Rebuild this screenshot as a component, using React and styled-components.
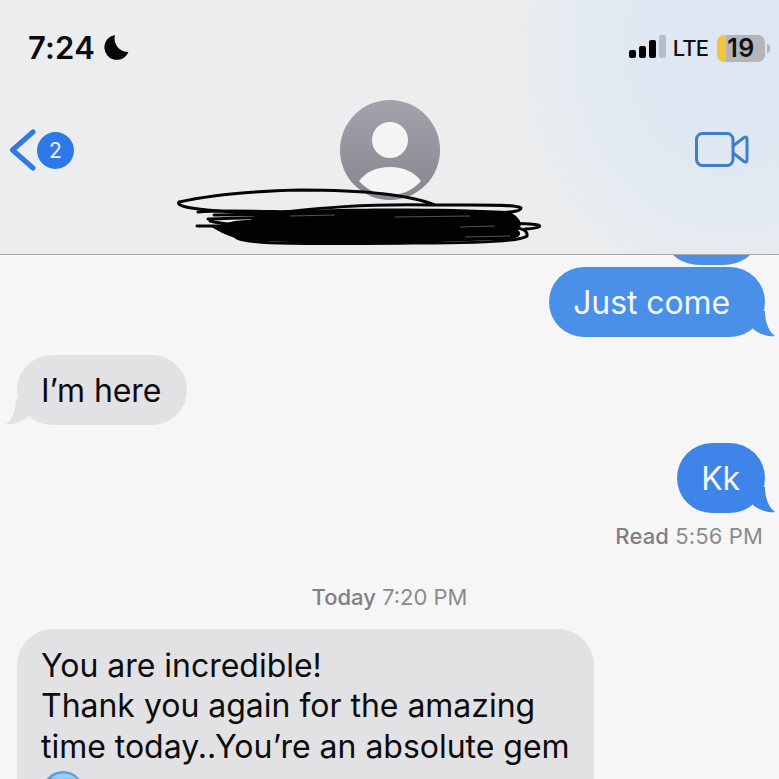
import React from "react";
import styled, { createGlobalStyle } from "styled-components";

const GlobalStyle = createGlobalStyle`
  html, body {
    margin: 0;
    padding: 0;
    background: #f6f6f6;
  }
  * { box-sizing: border-box; }
`;

const Screen = styled.div`
  width: 779px;
  height: 779px;
  overflow: hidden;
  display: flex;
  flex-direction: column;
  background: #f6f6f6;
  font-family: Inter, "Liberation Sans", sans-serif;
`;

const Header = styled.header`
  position: relative;
  height: 255px;
  flex: none;
  border-bottom: 1px solid #a9a9ab;
  background:
    radial-gradient(ellipse 230px 270px at 730px 50px, #dbe7f4 0%, rgba(222, 232, 243, 0.75) 55%, rgba(238, 239, 240, 0) 100%),
    #ecedee;
`;

const StatusBar = styled.div`
  height: 96px;
  display: flex;
  justify-content: space-between;
  align-items: flex-start;
  padding: 30px 14px 0 28px;
`;

const Clock = styled.div`
  display: flex;
  align-items: center;
  gap: 9px;
  font-size: 31px;
  line-height: 36px;
  font-weight: 600;
  letter-spacing: 0.2px;
  color: #0b0b0b;
`;

const Moon = styled.svg`
  margin-top: -3px;
`;

const StatusRight = styled.div`
  display: flex;
  align-items: center;
  height: 36px;
  gap: 8px;
`;

const Signal = styled.div`
  display: flex;
  align-items: flex-end;
  gap: 3px;
  height: 23px;
  margin-top: -3px;
  margin-right: -1px;
`;

const SignalBar = styled.span`
  width: 7px;
  height: ${(props) => props.$h}px;
  border-radius: 2px;
  background: ${(props) => (props.$off ? "#b9bdc3" : "#050505")};
`;

const Lte = styled.span`
  font-size: 22px;
  font-weight: 500;
  letter-spacing: -0.9px;
  color: #101010;
`;

const Battery = styled.div`
  position: relative;
  width: 48px;
  height: 27px;
  margin-left: 1px;
  border-radius: 7px;
  background: linear-gradient(90deg, #f2c53d 0 9px, #b3b5b8 9px);
  display: flex;
  align-items: center;
  justify-content: center;
  font-size: 25px;
  font-weight: 600;
  letter-spacing: 0.4px;
  color: #111;

  &::after {
    content: "";
    position: absolute;
    right: -5px;
    top: 9px;
    width: 3px;
    height: 9px;
    border-radius: 0 3px 3px 0;
    background: #b3b5b8;
  }
`;

const NavBar = styled.div`
  display: flex;
  justify-content: space-between;
  align-items: flex-start;
  padding: 4px 30px 0 10px;
`;

const BackLink = styled.div`
  display: flex;
  align-items: center;
  gap: 1px;
  margin-top: 28px;
`;

const Badge = styled.div`
  width: 37px;
  height: 37px;
  border-radius: 50%;
  background: #2f78e8;
  color: #eef4fd;
  display: flex;
  align-items: center;
  justify-content: center;
  font-size: 21px;
  font-weight: 400;
`;

const Avatar = styled.div`
  position: absolute;
  left: 340px;
  top: 100px;
  width: 100px;
  height: 100px;
  border-radius: 50%;
  overflow: hidden;
`;

const Scribble = styled.svg`
  position: absolute;
  left: 170px;
  top: 180px;
`;

const VideoIcon = styled.svg`
  margin-top: 32px;
`;

const Thread = styled.main`
  flex: 1;
  min-height: 0;
  position: relative;
  overflow: hidden;
  display: flex;
  flex-direction: column;
  padding: 12px 0 0;
`;

const Row = styled.div`
  display: flex;
  justify-content: ${(props) => (props.$out ? "flex-end" : "flex-start")};
  padding: ${(props) => (props.$out ? "0 14px 0 0" : "0 0 0 17px")};
  margin-top: ${(props) => props.$top || 0}px;
`;

const Bubble = styled.div`
  position: relative;
  padding: 18px ${(props) => props.$right || 25}px 17px 24px;
  border-radius: 35px;
  font-size: 32px;
  line-height: 35px;
  font-weight: 400;
  letter-spacing: -0.1px;
  white-space: nowrap;
  background: ${(props) => props.$tone};
  color: ${(props) => (props.$out ? "#f2f7fd" : "#0c0c0c")};
`;

const LongBubble = styled(Bubble)`
  width: 577px;
  height: 190px;
  padding: 16.5px 24px 0;
  border-radius: 36px;
  line-height: 40.5px;
  letter-spacing: -0.02px;
  flex: none;
`;

const Tail = styled.svg`
  position: absolute;
  bottom: 0;
  ${(props) => (props.$out ? "right: -10px;" : "left: -11px; transform: scaleX(-1);")}
`;

const CutBubble = styled.div`
  position: absolute;
  top: -34px;
  right: 24px;
  width: 87px;
  height: 44px;
  border-radius: 0 0 32px 32px / 0 0 22px 22px;
  background: #4a8fe8;
`;

const Note = styled.div`
  font-size: 22px;
  line-height: 28px;
  color: #8b8b8e;
  letter-spacing: ${(props) => (props.$align ? "0.12px" : "0")};
  text-align: ${(props) => props.$align || "center"};
  padding: ${(props) => (props.$align ? "0 16px 0 0" : "0")};
  margin-top: ${(props) => props.$top || 0}px;
`;

const NoteLabel = styled.span`
  font-weight: 500;
  color: #808083;
`;

const Emoji = styled.svg`
  display: block;
  margin-top: 3px;
`;

const BLUE = "#4a8fe8";
const DEEP_BLUE = "#3f84e8";
const GREY = "#e2e2e4";

function BubbleTail({ out, color }) {
  return (
    <Tail $out={out} width="22" height="26" viewBox="0 0 22 26">
      <path d="M0 0 L12 0 C12 8 14 19 22 25 C15 26 6 23 0 18 Z" fill={color} />
    </Tail>
  );
}

function App() {
  return (
    <Screen>
      <GlobalStyle />
      <Header>
        <StatusBar>
          <Clock>
            7:24
            <Moon width="25" height="26" viewBox="0 0 25 26">
              <path d="M11 1 A12.5 12.5 0 1 0 24.5 18 A13.5 13.5 0 0 1 11 1 Z" fill="#050505" />
            </Moon>
          </Clock>
          <StatusRight>
            <Signal>
              <SignalBar $h={8} />
              <SignalBar $h={12} />
              <SignalBar $h={18} />
              <SignalBar $h={23} $off />
            </Signal>
            <Lte>LTE</Lte>
            <Battery>19</Battery>
          </StatusRight>
        </StatusBar>
        <NavBar>
          <BackLink>
            <svg width="26" height="44" viewBox="0 0 26 44">
              <path d="M23 4 L2.5 22 L23 40" fill="none" stroke="#3279e2" strokeWidth="5" strokeLinecap="round" strokeLinejoin="round" />
            </svg>
            <Badge>2</Badge>
          </BackLink>
          <VideoIcon width="54" height="36" viewBox="0 0 54 36">
            <rect x="1.5" y="1.5" width="36.5" height="32" rx="6" fill="none" stroke="#3f7ccb" strokeWidth="3" />
            <path d="M38 14 L49 5.5 Q52 4 52 7 L52 28 Q52 31 49 29.5 L38 21" fill="none" stroke="#3f7ccb" strokeWidth="3" strokeLinejoin="round" />
          </VideoIcon>
        </NavBar>
        <Avatar>
          <svg width="100" height="100" viewBox="0 0 100 100">
            <defs>
              <linearGradient id="avatarFill" x1="0" y1="0" x2="0" y2="1">
                <stop offset="0" stopColor="#a2a3ab" />
                <stop offset="1" stopColor="#85868e" />
              </linearGradient>
            </defs>
            <rect width="100" height="100" fill="url(#avatarFill)" />
            <circle cx="50" cy="40" r="18" fill="#f4f4f5" />
            <path d="M19 81 C26 72 36 67 50 67 C64 67 74 72 81 81 C73 90 62 95 50 95 C38 95 27 90 19 81 Z" fill="#f4f4f5" />
          </svg>
        </Avatar>
        <Scribble width="380" height="70" viewBox="0 0 380 70">
          <g fill="none" stroke="#050505" strokeWidth="3" strokeLinecap="round">
            <path d="M265 25 C240 15 190 10 130 10 C90 11 40 15 9 22 C6 26 20 29 50 31 C75 33 85 35 115 32 C150 28 190 24 260 25 C310 25 348 24 351 28 C351 32 340 33 300 34" />
            <path d="M28 32 C60 29 120 33 140 32" />
            <path d="M38 39 C100 37 250 35 345 38" />
            <path d="M44 35 C90 34 120 36 160 35" />
            <path d="M27 46 C100 47 280 40 360 44 C375 45 372 48 355 49" />
            <path d="M40 41 C60 46 80 46 100 47" />
            <path d="M52 51 C90 52 120 52 150 52" />
            <path d="M66 57 C70 65 150 64 250 63 C300 63 350 62 357 56 C358 50 350 47 340 48" />
          </g>
          <path d="M90 32 C150 28 260 27 338 31 C350 37 354 44 348 50 C354 55 347 60 330 60 C260 63 150 64 70 60 C60 56 48 52 42 47 C55 44 60 40 80 40 Z" fill="#020202" />
          <g fill="none" stroke="#6a6a6a" strokeWidth="0.8">
            <path d="M120 36 L165 35 M225 37 L300 36 M290 47 L325 46 M295 57 L340 56" />
          </g>
        </Scribble>
      </Header>
      <Thread>
        <CutBubble />
        <Row $out>
          <Bubble $out $tone={BLUE} $right={35}>
            Just come
            <BubbleTail out color={BLUE} />
          </Bubble>
        </Row>
        <Row $top={18}>
          <Bubble $tone={GREY} $right={26}>
            I’m here
            <BubbleTail color={GREY} />
          </Bubble>
        </Row>
        <Row $out $top={18}>
          <Bubble $out $tone={DEEP_BLUE}>
            Kk
            <BubbleTail out color={DEEP_BLUE} />
          </Bubble>
        </Row>
        <Note $align="right" $top={9}>
          <NoteLabel>Read</NoteLabel> 5:56 PM
        </Note>
        <Note $top={33}>
          <NoteLabel>Today</NoteLabel> 7:20 PM
        </Note>
        <Row $top={18}>
          <LongBubble $tone={GREY}>
            You are incredible!
            <br />
            Thank you again for the amazing
            <br />
            time today..You’re an absolute gem
            <Emoji width="44" height="44" viewBox="0 0 44 44">
              <circle cx="22" cy="22" r="21" fill="#5aa0e0" />
              <path d="M10 8 C18 2 28 2 36 9 C28 8 18 10 10 8 Z" fill="#9cd0f2" />
            </Emoji>
          </LongBubble>
        </Row>
      </Thread>
    </Screen>
  );
}

export default App;
